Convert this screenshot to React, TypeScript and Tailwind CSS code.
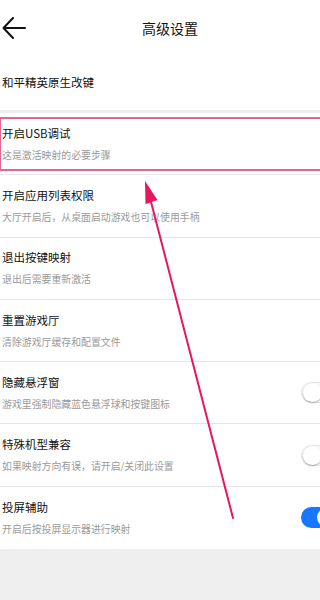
import React from 'react';

type Item = {
  title: string;
  desc: string;
  toggle?: 'on' | 'off';
};

const items: Item[] = [
  { title: '开启USB调试', desc: '这是激活映射的必要步骤' },
  { title: '开启应用列表权限', desc: '大厅开启后，从桌面启动游戏也可以使用手柄' },
  { title: '退出按键映射', desc: '退出后需要重新激活' },
  { title: '重置游戏厅', desc: '清除游戏厅缓存和配置文件' },
  { title: '隐藏悬浮窗', desc: '游戏里强制隐藏蓝色悬浮球和按键图标', toggle: 'off' },
  { title: '特殊机型兼容', desc: '如果映射方向有误，请开启/关闭此设置', toggle: 'off' },
  { title: '投屏辅助', desc: '开启后按投屏显示器进行映射', toggle: 'on' },
];

function Toggle({ on }: { on: boolean }) {
  return (
    <div
      className={`mr-[-17px] flex h-[21px] w-[36px] shrink-0 items-center rounded-full p-[1px] ${
        on ? 'justify-end bg-[#1677ff]' : 'justify-start border border-[#e3e3e3] bg-[#fbfbfb]'
      }`}
    >
      <div
        className={`h-[19px] w-[19px] rounded-full bg-white ${
          on ? '' : 'shadow-[0_1px_2px_rgba(0,0,0,0.3)]'
        }`}
      />
    </div>
  );
}

export default function App() {
  return (
    <div
      className="relative h-[600px] w-[320px] overflow-hidden bg-[#efefef]"
      style={{ fontFamily: '"Noto Sans CJK SC", "Noto Sans", sans-serif' }}
    >
      <div className="bg-white">
        {/* header */}
        <div className="flex h-[55px] items-center">
          <div className="flex w-[30px] items-center pl-[2px]">
            <svg width="24" height="22" viewBox="0 0 24 22" fill="none" stroke="#111" strokeWidth="2" strokeLinecap="round" strokeLinejoin="round">
              <path d="M23 11H2" />
              <path d="M11 1L1.5 11L11 21" />
            </svg>
          </div>
          <div className="flex flex-1 justify-center pr-[10px] text-[14px] leading-[20px] text-[#111]">高级设置</div>
        </div>

        <div className="flex h-[55px] items-center pl-[2px] text-[11.5px] text-[#111]">和平精英原生改键</div>
        <div className="h-[3px] bg-[#eeeeee]" />

        {items.map((it, i) => (
          <div
            key={it.title}
            className={`flex h-[62.3px] items-center justify-between pl-[2px] ${
              i < items.length - 1 ? 'border-b border-[#e6e6e6]' : ''
            }`}
          >
            <div className="flex flex-col">
              <div className="text-[11.5px] leading-[16px] text-[#111]">{it.title}</div>
              <div className="mt-[6px] text-[9.9px] leading-[16px] text-[#9a9a9a]">{it.desc}</div>
            </div>
            {it.toggle && <Toggle on={it.toggle === 'on'} />}
          </div>
        ))}
      </div>

      {/* annotation */}
      <div className="pointer-events-none absolute left-0 top-[117px] h-[54px] w-[324px] border-2 border-l border-[#e2668f]" />
      <svg className="pointer-events-none absolute left-0 top-0" width="320" height="600" viewBox="0 0 320 600">
        <line x1="233" y1="518" x2="150" y2="198" stroke="#e8175d" strokeWidth="2" strokeLinecap="round" />
        <polygon points="145,181 157.5,200 145.5,204" fill="#e8175d" />
      </svg>
    </div>
  );
}
